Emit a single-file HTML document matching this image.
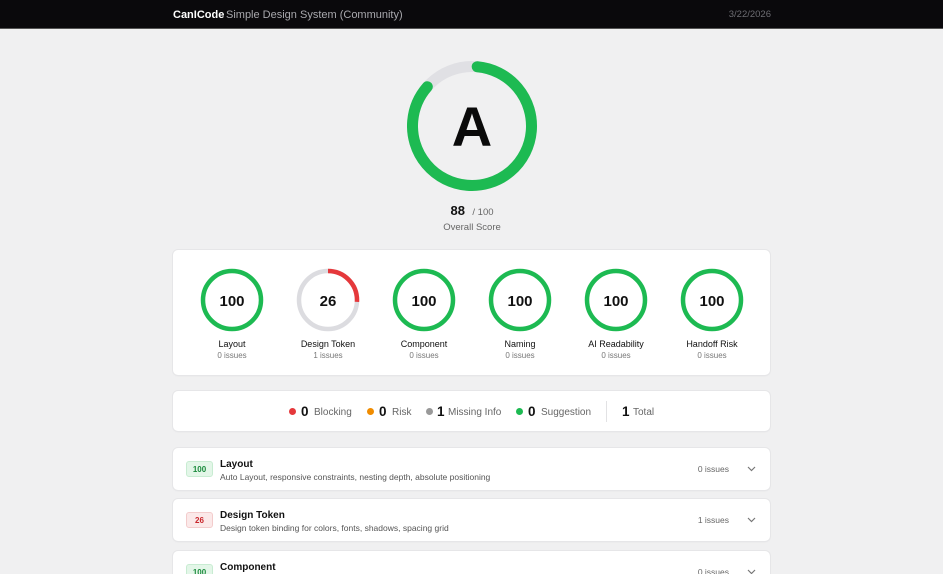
<!DOCTYPE html>
<html><head><meta charset="utf-8"><style>
*{margin:0;padding:0;box-sizing:border-box}
html,body{width:943px;height:574px;overflow:hidden}
body{background:#f0f0f1;font-family:"Liberation Sans",sans-serif;color:#111;position:relative}
.hdr{position:absolute;left:0;top:0;width:943px;height:29px;background:#0a090c;border-bottom:1px solid #555}
.hdr .b{position:absolute;left:173px;top:9px;font-size:11px;font-weight:bold;color:#fff}
.hdr .t{position:absolute;left:226px;top:9px;font-size:11px;color:#a8a8ad}
.hdr .d{position:absolute;right:172px;top:9px;font-size:9.5px;color:#6c6c72}
.card{position:absolute;left:173px;width:597px;background:#fff;border-radius:5px;box-shadow:0 0 0 1px #e6e6e8,0 1px 2px rgba(0,0,0,.05)}
.c{position:absolute;text-align:center}
.sm{position:absolute;width:96px;text-align:center}
.sm .l{font-size:9px;color:#111}
.sm .i{font-size:8px;color:#777;margin-top:2px}
.row .badge{position:absolute;left:13px;top:13px;width:27px;height:16px;border-radius:3px;font-size:8px;font-weight:bold;text-align:center;line-height:15px}
.row .n{position:absolute;left:47px;top:11px;font-size:10px;font-weight:bold}
.row .s{position:absolute;left:47px;top:24px;font-size:8.5px;color:#555}
.row .r{position:absolute;right:41px;top:16px;font-size:8.5px;color:#666}
.row svg{position:absolute;right:14px;top:18px}
</style></head><body>
<div class="hdr"><span class="b">CanICode</span><span class="t">Simple Design System (Community)</span><span class="d">3/22/2026</span></div>

<svg style="position:absolute;left:401px;top:55px" width="142" height="142">
<circle cx="71" cy="71" r="59.5" fill="none" stroke="#e0e0e4" stroke-width="11"/>
<circle cx="71" cy="71" r="59.5" fill="none" stroke="#1dba52" stroke-width="11" stroke-linecap="round" stroke-dasharray="318 400" transform="rotate(-85 71 71)"/>
<text x="71" y="91" text-anchor="middle" font-family="Liberation Sans" font-weight="bold" font-size="56" fill="#0a0a0a">A</text>
</svg>
<div class="c" style="left:372px;width:200px;top:202px"><b style="font-size:13px">88</b> <span style="font-size:9.5px;color:#666;margin-left:3px">/ 100</span></div>
<div class="c" style="left:372px;width:200px;top:222px;font-size:9.5px;color:#666">Overall Score</div>

<div class="card" style="top:250px;height:125px"></div>
<svg style="position:absolute;left:0;top:0" width="943" height="574">
<g fill="none" stroke-width="4.5">
<circle cx="232" cy="300" r="29" stroke="#1dba52"/>
<circle cx="328" cy="300" r="29" stroke="#dcdce0"/>
<circle cx="328" cy="300" r="29" stroke="#e5383b" stroke-dasharray="47.4 200" transform="rotate(-90 328 300)"/>
<circle cx="424" cy="300" r="29" stroke="#1dba52"/>
<circle cx="520" cy="300" r="29" stroke="#1dba52"/>
<circle cx="616" cy="300" r="29" stroke="#1dba52"/>
<circle cx="712" cy="300" r="29" stroke="#1dba52"/>
</g>
<g font-family="Liberation Sans" font-weight="bold" font-size="15" text-anchor="middle" fill="#111">
<text x="232" y="306">100</text><text x="328" y="306">26</text><text x="424" y="306">100</text><text x="520" y="306">100</text><text x="616" y="306">100</text><text x="712" y="306">100</text>
</g>
</svg>
<div class="sm" style="left:184px;top:339px"><div class="l">Layout</div><div class="i">0 issues</div></div>
<div class="sm" style="left:280px;top:339px"><div class="l">Design Token</div><div class="i">1 issues</div></div>
<div class="sm" style="left:376px;top:339px"><div class="l">Component</div><div class="i">0 issues</div></div>
<div class="sm" style="left:472px;top:339px"><div class="l">Naming</div><div class="i">0 issues</div></div>
<div class="sm" style="left:568px;top:339px"><div class="l">AI Readability</div><div class="i">0 issues</div></div>
<div class="sm" style="left:664px;top:339px"><div class="l">Handoff Risk</div><div class="i">0 issues</div></div>

<div class="card" style="top:391px;height:40px"></div>
<div style="position:absolute;top:404px;left:0;width:943px;font-size:10px;color:#666">
<span style="position:absolute;left:289px;top:4px;width:7px;height:7px;border-radius:50%;background:#e5383b"></span>
<b style="position:absolute;left:301px;top:0;font-size:13.5px;color:#111">0</b><span style="position:absolute;left:314px;top:3px">Blocking</span>
<span style="position:absolute;left:367px;top:4px;width:7px;height:7px;border-radius:50%;background:#f08c00"></span>
<b style="position:absolute;left:379px;top:0;font-size:13.5px;color:#111">0</b><span style="position:absolute;left:392px;top:3px">Risk</span>
<span style="position:absolute;left:426px;top:4px;width:7px;height:7px;border-radius:50%;background:#999"></span>
<b style="position:absolute;left:437px;top:0;font-size:13.5px;color:#111">1</b><span style="position:absolute;left:448px;top:3px">Missing Info</span>
<span style="position:absolute;left:516px;top:4px;width:7px;height:7px;border-radius:50%;background:#1dba52"></span>
<b style="position:absolute;left:528px;top:0;font-size:13.5px;color:#111">0</b><span style="position:absolute;left:541px;top:3px">Suggestion</span>
<span style="position:absolute;left:606px;top:-3px;width:1px;height:21px;background:#e2e2e4"></span>
<b style="position:absolute;left:622px;top:0;font-size:13.5px;color:#111">1</b><span style="position:absolute;left:633px;top:3px">Total</span>
</div>

<div class="card row" style="top:448px;height:42px"><div class="badge" style="background:#e3f6e8;color:#1a8a3c;border:1px solid #c8ecd2">100</div><div class="n">Layout</div><div class="s">Auto Layout, responsive constraints, nesting depth, absolute positioning</div><div class="r">0 issues</div><svg width="9" height="6"><path d="M1 1l3.5 3.5L8 1" fill="none" stroke="#777" stroke-width="1.2"/></svg></div>
<div class="card row" style="top:499px;height:42px"><div class="badge" style="background:#fbe9e9;color:#c8262b;border:1px solid #f3cccc">26</div><div class="n">Design Token</div><div class="s">Design token binding for colors, fonts, shadows, spacing grid</div><div class="r">1 issues</div><svg width="9" height="6"><path d="M1 1l3.5 3.5L8 1" fill="none" stroke="#777" stroke-width="1.2"/></svg></div>
<div class="card row" style="top:551px;height:42px"><div class="badge" style="background:#e3f6e8;color:#1a8a3c;border:1px solid #c8ecd2">100</div><div class="n">Component</div><div class="r">0 issues</div><svg width="9" height="6"><path d="M1 1l3.5 3.5L8 1" fill="none" stroke="#777" stroke-width="1.2"/></svg></div>
</body></html>
